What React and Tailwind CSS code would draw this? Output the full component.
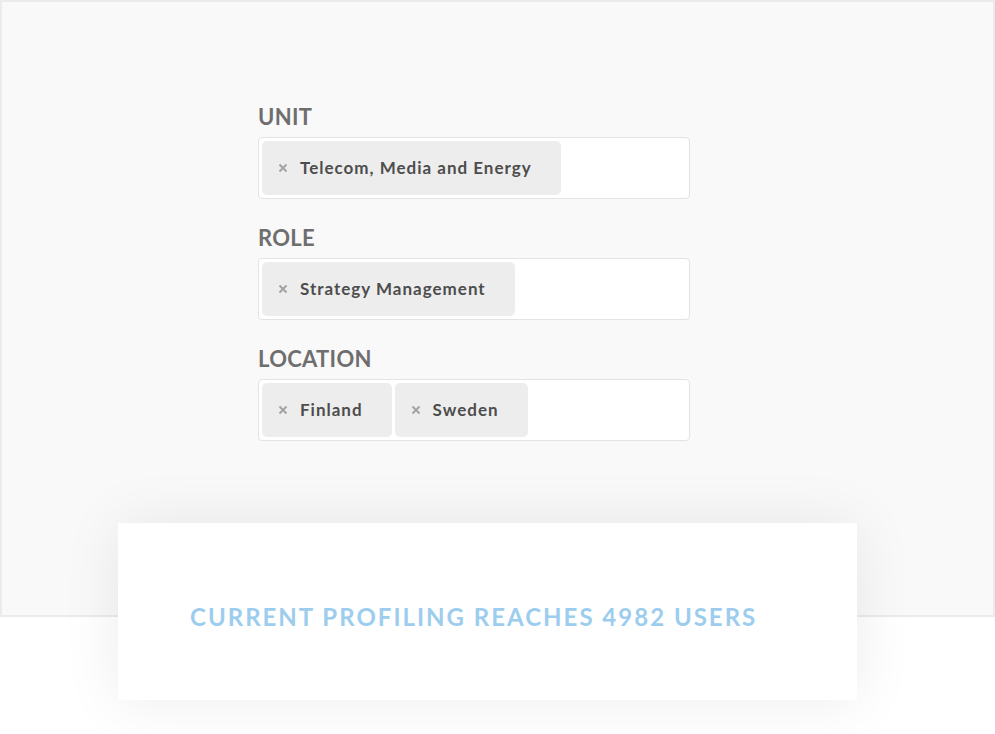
import React from "react";

const font = { fontFamily: "Lato, 'Open Sans', sans-serif" };

function Tag({ children }) {
  return (
    <div className="flex h-[54px] items-center rounded-[5px] bg-[#ededed] pl-4 pr-[29px]">
      <svg width="10" height="10" viewBox="0 0 10 10" className="mr-3 shrink-0">
        <path d="M1.5 1.5 L8.5 8.5 M8.5 1.5 L1.5 8.5" stroke="#a3a3a3" strokeWidth="2" strokeLinecap="butt" />
      </svg>
      <span className="text-[17px] font-bold tracking-[1px] text-[#4d4d4d]">{children}</span>
    </div>
  );
}

function Field({ label, tags }) {
  return (
    <div className="flex flex-col">
      <div className="h-[26px] text-[22px] leading-[26px] font-bold tracking-[0.3px] text-[#6e6e6e]">{label}</div>
      <div className="mt-[7px] flex h-[62px] gap-[3px] rounded-[4px] border border-[#e3e3e3] bg-white p-[3px]">
        {tags.map((t) => (
          <Tag key={t}>{t}</Tag>
        ))}
      </div>
    </div>
  );
}

export default function App() {
  return (
    <div className="min-h-[734px] w-[995px] bg-white" style={font}>
      <div className="h-[617px] border-2 border-[#ebebeb] bg-[#f9f9f9]">
        <div className="ml-[256px] flex w-[432px] flex-col gap-[26px] pt-[102px]">
          <Field label="UNIT" tags={["Telecom, Media and Energy"]} />
          <Field label="ROLE" tags={["Strategy Management"]} />
          <Field label="LOCATION" tags={["Finland", "Sweden"]} />
        </div>
      </div>
      <div className="relative ml-[118px] -mt-[94px] flex h-[177px] w-[739px] items-center bg-white pl-[72px] pt-[10px] shadow-[0_0_60px_rgba(0,0,0,0.08)]">
        <span className="text-[24px] font-bold tracking-[2px] text-[#9dcdee]">
          CURRENT PROFILING REACHES 4982 USERS
        </span>
      </div>
    </div>
  );
}
